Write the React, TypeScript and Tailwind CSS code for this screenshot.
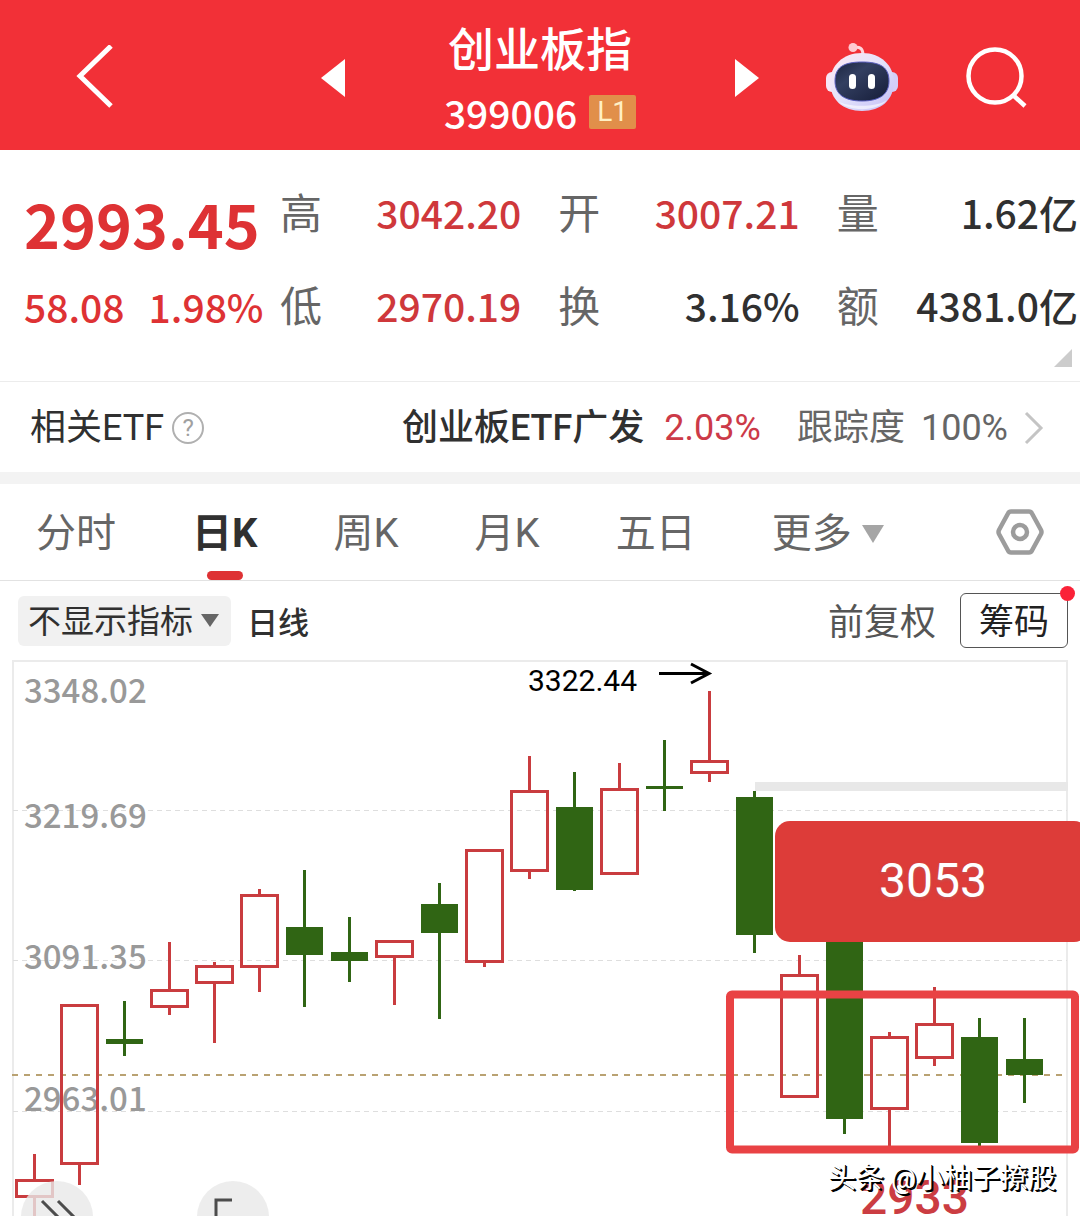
import { useState } from "react";

type Candle = {
  high: number;
  top: number;
  bottom: number;
  low: number;
  up: boolean;
};

// y values are chart units, one candle every 45 units
const candles: Candle[] = [
  { high: 494, top: 519, bottom: 538, low: 570, up: true },
  { high: 344, top: 344, bottom: 505, low: 525, up: true },
  { high: 341, top: 379, bottom: 384, low: 396, up: false },
  { high: 282, top: 329, bottom: 348, low: 355, up: true },
  { high: 302, top: 305, bottom: 324, low: 383, up: true },
  { high: 229, top: 234, bottom: 308, low: 332, up: true },
  { high: 210, top: 267, bottom: 295, low: 347, up: false },
  { high: 257, top: 292, bottom: 301, low: 322, up: false },
  { high: 280, top: 280, bottom: 298, low: 345, up: true },
  { high: 223, top: 244, bottom: 273, low: 359, up: false },
  { high: 189, top: 189, bottom: 303, low: 307, up: true },
  { high: 96, top: 130, bottom: 212, low: 219, up: true },
  { high: 112, top: 147, bottom: 230, low: 231, up: false },
  { high: 103, top: 128, bottom: 215, low: 215, up: true },
  { high: 80, top: 126, bottom: 129, low: 151, up: false },
  { high: 31, top: 100, bottom: 114, low: 122, up: true },
  { high: 131, top: 137, bottom: 275, low: 293, up: false },
  { high: 295, top: 314, bottom: 438, low: 438, up: true },
  { high: 230, top: 240, bottom: 459, low: 474, up: false },
  { high: 372, top: 376, bottom: 450, low: 486, up: true },
  { high: 327, top: 363, bottom: 399, low: 406, up: true },
  { high: 358, top: 377, bottom: 483, low: 486, up: false },
  { high: 358, top: 399, bottom: 415, low: 443, up: false },
];

const axisLabels = [
  { text: "3348.02", y: 43 },
  { text: "3219.69", y: 168 },
  { text: "3091.35", y: 309 },
  { text: "2963.01", y: 451 },
];

const quotes = [
  { label: "高", value: "3042.20", red: true },
  { label: "开", value: "3007.21", red: true },
  { label: "量", value: "1.62", unit: "亿" },
  { label: "低", value: "2970.19", red: true },
  { label: "换", value: "3.16%" },
  { label: "额", value: "4381.0", unit: "亿" },
];

const tabs = ["分时", "日K", "周K", "月K", "五日"];

function Robot() {
  return (
    <svg width="72" height="70" viewBox="0 0 72 70" fill="none">
      <defs>
        <linearGradient id="shell" x1="0" y1="0" x2="1" y2="1">
          <stop offset="0" stopColor="#ffe9f2" />
          <stop offset="0.5" stopColor="#e3e2fb" />
          <stop offset="1" stopColor="#c3bdf6" />
        </linearGradient>
        <linearGradient id="visor" x1="0" y1="0" x2="1" y2="1">
          <stop offset="0" stopColor="#1c2540" />
          <stop offset="0.35" stopColor="#333f61" />
          <stop offset="1" stopColor="#151c38" />
        </linearGradient>
      </defs>
      <path d="M27 5c6-2 10 0 10 7" stroke="#ffd5dc" strokeWidth="3" />
      <circle cx="27" cy="4.5" r="4.5" fill="#ffc9d0" />
      <rect x="0" y="29" width="14" height="20" rx="6" fill="#f7e6f6" />
      <rect x="58" y="29" width="14" height="20" rx="6" fill="#d4cef8" />
      <path
        d="M36 10C56 10 67 23 68 38c0 19-13 30-32 30S4 57 4 38C5 23 16 10 36 10Z"
        fill="url(#shell)"
      />
      <path d="M12 58c10 11 40 11 49-1-8 7-40 8-49 1Z" fill="#fff" opacity="0.6" />
      <path
        d="M36 19c18 0 27 5 27 19 0 13-9 20-27 20S9 51 9 38c0-14 9-19 27-19Z"
        fill="url(#visor)"
        stroke="#5a5fc0"
        strokeWidth="1"
      />
      <rect x="23" y="31" width="7" height="15" rx="3.5" fill="#fff" />
      <rect x="42" y="31" width="7" height="15" rx="3.5" fill="#fff" />
    </svg>
  );
}

function Header() {
  return (
    <header className="grid h-[150px] grid-cols-[1fr_438px_1fr] items-center bg-[#f23037] pt-[6px] text-white">
      <div className="pl-[74px]">
        <button type="button" aria-label="返回" className="block">
          <svg width="40" height="66" viewBox="0 0 40 66" fill="none">
            <path d="M37 1 6 31l31 30" stroke="#fff" strokeWidth="5" />
          </svg>
        </button>
      </div>

      <div className="flex items-center justify-between">
        <button type="button" aria-label="上一个">
          <svg width="24" height="38" viewBox="0 0 24 38">
            <path d="M24 0v38L0 19Z" fill="#fff" />
          </svg>
        </button>
        <div className="flex flex-col items-center pt-1">
          <h1 className="text-[46px] leading-[64px] font-medium">创业板指</h1>
          <div className="flex items-center gap-3">
            <span className="font-['Noto_Sans_CJK_SC',sans-serif] text-[39px] leading-[60px] font-medium">
              399006
            </span>
            <span className="rounded-xs bg-[#e18f4a] px-2 font-[Roboto,sans-serif] text-[28px] leading-[34px] text-[#fff0c4]">
              L1
            </span>
          </div>
        </div>
        <button type="button" aria-label="下一个">
          <svg width="24" height="38" viewBox="0 0 24 38">
            <path d="M0 0v38l24-19Z" fill="#fff" />
          </svg>
        </button>
      </div>

      <div className="flex items-center justify-end gap-[68px] pr-[52px]">
        <button type="button" aria-label="助手">
          <Robot />
        </button>
        <button type="button" aria-label="搜索">
          <svg width="62" height="64" viewBox="0 0 62 64" fill="none" stroke="#fff">
            <circle cx="29" cy="30" r="26.5" strokeWidth="4.5" />
            <path d="m47 49 12 11" strokeWidth="4.5" />
          </svg>
        </button>
      </div>
    </header>
  );
}

function QuotePanel() {
  return (
    <section className="border-b border-[#ececec]">
      <div className="flex pt-[18px]">
        <div className="w-[280px] shrink-0 pl-[24px] font-['Noto_Sans_CJK_SC',sans-serif] text-[#de3234]">
          <div className="pt-4 text-[61px] leading-[78px] font-bold">2993.45</div>
          <div className="flex gap-6 pt-[14px] text-[39px] leading-[60px] font-medium">
            <span>58.08</span>
            <span>1.98%</span>
          </div>
        </div>
        <dl className="grid flex-1 grid-cols-3 gap-x-[37px] pr-[2px]">
          {quotes.map((q) => (
            <div key={q.label} className="flex h-[93px] items-center justify-between">
              <dt className="text-[42px] text-[#666]">{q.label}</dt>
              <dd
                className={
                  q.red
                    ? "pb-[6px] font-['Noto_Sans_CJK_SC',sans-serif] text-[39px] leading-[60px] font-medium text-[#cf383b]"
                    : "pb-[6px] font-['Noto_Sans_CJK_SC',sans-serif] text-[39px] leading-[60px] font-medium text-[#303030]"
                }
              >
                {q.value}
                {q.unit}
              </dd>
            </div>
          ))}
        </dl>
      </div>
      <div className="-mt-[5px] flex justify-end pr-2 pb-[14px]">
        <svg width="18" height="18" viewBox="0 0 18 18">
          <path d="M18 0v18H0Z" fill="#ccc" />
        </svg>
      </div>
    </section>
  );
}

function EtfRow() {
  return (
    <section className="flex h-[102px] items-center justify-between border-b-[12px] border-[#f3f3f3] pt-[2px] pr-[36px] pl-[30px] text-[36px] text-[#303030]">
      <div className="flex items-center gap-2">
        <span>相关ETF</span>
        <button
          type="button"
          aria-label="说明"
          className="flex size-8 items-center justify-center rounded-full border-2 border-[#b0b0b0] text-[24px] leading-none text-[#a0a0a0]"
        >
          ?
        </button>
      </div>
      <a href="#etf" className="flex items-center">
        <span className="font-medium">创业板ETF广发</span>
        <span className="ml-5 text-[#cc3a48]">2.03%</span>
        <span className="ml-9 text-[#666]">跟踪度</span>
        <span className="ml-4 text-[#666]">100%</span>
        <svg className="ml-4" width="20" height="34" viewBox="0 0 20 34" fill="none">
          <path d="m2 2 15 15L2 32" stroke="#c4c4c4" strokeWidth="3" />
        </svg>
      </a>
    </section>
  );
}

function Tabs() {
  const [active, setActive] = useState("日K");

  return (
    <nav className="flex h-[97px] items-stretch justify-between border-b border-[#e2e2e2] pr-[36px] pl-[36px] text-[40px]">
      <div className="flex gap-[76px]">
        {tabs.map((t) => (
          <button
            key={t}
            type="button"
            onClick={() => setActive(t)}
            className={
              t === active
                ? "relative pt-1 font-bold text-[#303030]"
                : "relative pt-1 text-[#666]"
            }
          >
            {t}
            {t === active && (
              <span className="absolute bottom-0 left-1/2 h-[9px] w-9 -translate-x-1/2 rounded-full bg-[#de3234]" />
            )}
          </button>
        ))}
        <button type="button" className="flex items-center gap-[10px] pt-1 text-[#666]">
          更多
          <svg width="22" height="18" viewBox="0 0 22 18">
            <path d="M0 0h22L11 18Z" fill="#a5a5a5" />
          </svg>
        </button>
      </div>
      <button type="button" aria-label="设置">
        <svg width="48" height="46" viewBox="0 0 48 46" fill="none" stroke="#9c9c9c">
          <path
            d="M15 2.5h18q2 0 3 2l9 16.5q1 2 0 4l-9 16.5q-1 2-3 2H15q-2 0-3-2L3 25q-1-2 0-4L12 4.5q1-2 3-2Z"
            strokeWidth="4.5"
          />
          <circle cx="24" cy="23" r="7" strokeWidth="4.5" />
        </svg>
      </button>
    </nav>
  );
}

function Toolbar() {
  return (
    <div className="flex h-[79px] items-center justify-between pr-3 pl-[18px]">
      <div className="flex items-center gap-4">
        <div className="relative">
          <select
            aria-label="指标"
            className="block h-[50px] w-[213px] appearance-none rounded-md bg-[#f1f1f1] pt-[2px] pl-[10px] text-[33px] leading-[48px] text-[#303030]"
          >
            <option>不显示指标</option>
          </select>
          <svg
            className="pointer-events-none absolute top-[18px] right-3"
            width="18"
            height="13"
            viewBox="0 0 18 13"
          >
            <path d="M0 0h18L9 13Z" fill="#666" />
          </svg>
        </div>
        <span className="pt-2 text-[31px] font-medium text-[#303030]">日线</span>
      </div>
      <div className="flex items-center gap-6">
        <button type="button" className="pt-1 text-[36px] text-[#555]">
          前复权
        </button>
        <button
          type="button"
          className="relative h-[55px] w-[108px] rounded-md border border-[#555] pt-1 text-[35px] leading-[49px] text-[#222]"
        >
          筹码
          <span className="absolute -top-2 -right-2 size-[15px] rounded-full bg-[#fa2238]" />
        </button>
      </div>
    </div>
  );
}

function CandleShape({ candle, x }: { candle: Candle; x: number }) {
  const { high, top, bottom, low, up } = candle;
  const color = up ? "#c93c3f" : "#306514";

  return (
    <g stroke={color} strokeWidth="3">
      {high < top && <line x1={x} x2={x} y1={high} y2={top + 1} />}
      {low > bottom && <line x1={x} x2={x} y1={bottom - 1} y2={low} />}
      {up ? (
        <rect
          x={x - 18}
          y={top + 1.5}
          width="36"
          height={bottom - top - 3}
          fill="none"
        />
      ) : (
        <rect
          x={x - 18.5}
          y={top}
          width="37"
          height={bottom - top}
          fill={color}
          stroke="none"
        />
      )}
    </g>
  );
}

function Chart() {
  return (
    <section className="relative overflow-hidden">
      <svg className="block h-auto w-full" viewBox="0 0 1080 556">
        {/* Frame and grid */}
        <path d="M13 556V1h1054v555" fill="none" stroke="#ebebeb" strokeWidth="2" />
        {[150.5, 300.5, 451.5].map((y) => (
          <line
            key={y}
            x1="13"
            x2="1067"
            y1={y}
            y2={y}
            stroke="#dedede"
            strokeDasharray="5 4"
          />
        ))}
        <rect x="755" y="122" width="313" height="9" fill="#e8e8e8" />
        <line
          x1="12"
          x2="1067"
          y1="415"
          y2="415"
          stroke="#b9a272"
          strokeWidth="2"
          strokeDasharray="6 6"
        />

        {/* Axis labels */}
        <g
          className="font-['Noto_Sans_CJK_SC',sans-serif] text-[33px] font-medium"
          fill="#999"
        >
          {axisLabels.map((l) => (
            <text key={l.text} x="24" y={l.y}>
              {l.text}
            </text>
          ))}
        </g>

        {candles.map((c, i) => (
          <CandleShape key={i} candle={c} x={34.5 + i * 45} />
        ))}

        {/* Peak marker */}
        <text x="528" y="31" className="font-[Roboto,sans-serif] text-[30px]">
          3322.44
        </text>
        <path
          d="M659 13.5h50M691 4l18 9.5-18 9.5"
          fill="none"
          stroke="#000"
          strokeWidth="3"
        />

        {/* Resistance and range box */}
        <rect x="775" y="161" width="314" height="121" rx="15" fill="#dd3c39" />
        <text
          x="879"
          y="237"
          fill="#fff"
          className="font-[Roboto,sans-serif] text-[48px] [text-shadow:0_1px_3px_#8886]"
        >
          3053
        </text>
        <rect
          x="730"
          y="334.5"
          width="345"
          height="155"
          rx="2"
          fill="none"
          stroke="#e94244"
          strokeWidth="8"
        />
        <text
          x="860"
          y="554"
          fill="#cb3d42"
          className="font-[Roboto,sans-serif] text-[48px] font-medium"
        >
          2933
        </text>

        <text
          x="828"
          y="528"
          fill="#fff"
          className="font-[Roboto,'Noto_Sans_CJK_SC',sans-serif] text-[28px] [text-shadow:1px_1px_0_#000,2px_2px_0_#000]"
        >
          头条 @小柚子撩股
        </text>
      </svg>

      <button
        type="button"
        aria-label="收起"
        className="absolute -bottom-[37px] left-[21px] size-[72px] rounded-full bg-[#e9e9e9]/80"
      >
        <svg width="72" height="72" viewBox="0 0 72 72" fill="none">
          <path
            d="m21 20 16 16-16 16M37 20l16 16-16 16"
            stroke="#4c4c4c"
            strokeWidth="3"
          />
        </svg>
      </button>
      <button
        type="button"
        aria-label="全屏"
        className="absolute -bottom-[37px] left-[197px] size-[72px] rounded-full bg-[#e9e9e9]/80"
      >
        <svg width="72" height="72" viewBox="0 0 72 72" fill="none">
          <path
            d="M35 19H19v16M37 53h16V37"
            stroke="#4c4c4c"
            strokeWidth="3"
          />
        </svg>
      </button>
    </section>
  );
}

export default function App() {
  return (
    <main className="bg-white font-[Roboto,'Noto_Sans_CJK_SC',sans-serif]">
      <Header />
      <QuotePanel />
      <EtfRow />
      <Tabs />
      <Toolbar />
      <Chart />
    </main>
  );
}
